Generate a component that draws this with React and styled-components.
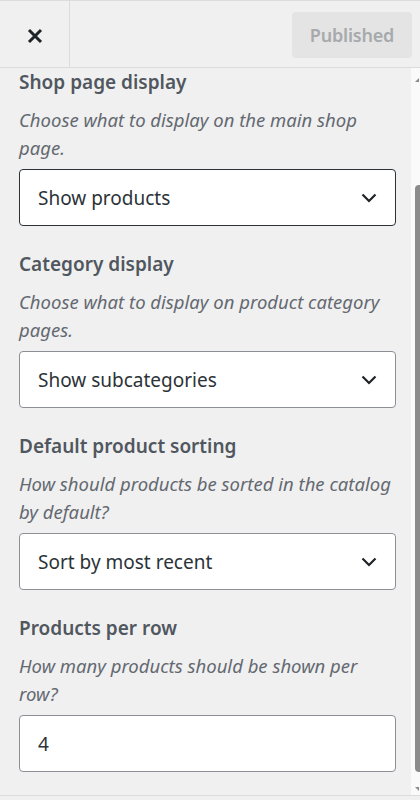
import React from "react";
import styled, { createGlobalStyle } from "styled-components";

const GlobalStyle = createGlobalStyle`
  html, body { margin: 0; padding: 0; background: #f0f0f1; }
  body { font-family: "Noto Sans", "Open Sans", sans-serif; }
  * { box-sizing: border-box; }
`;

const Page = styled.div`
  width: 420px;
  height: 800px;
  display: flex;
  flex-direction: column;
  background: #f0f0f1;
  overflow: hidden;
`;

const Header = styled.header`
  height: 68px;
  flex: 0 0 68px;
  display: flex;
  align-items: center;
  justify-content: space-between;
  border-top: 1px solid #dcdcde;
  border-bottom: 1px solid #dcdcde;
  background: #f0f0f1;
`;

const CloseButton = styled.button`
  width: 70px;
  height: 100%;
  display: flex;
  align-items: center;
  justify-content: center;
  padding: 3px 0 0;
  background: transparent;
  border: none;
  border-right: 1px solid #dcdcde;
  color: #1d2327;
`;

const PublishButton = styled.button`
  width: 120px;
  height: 46px;
  margin-right: 8px;
  margin-top: 2px;
  border: none;
  border-radius: 4px;
  background: #e4e4e4;
  color: #a7aaad;
  font-family: "Noto Sans", sans-serif;
  font-size: 18px;
  font-weight: 600;
  letter-spacing: -0.2px;
`;

const Body = styled.div`
  flex: 1;
  display: flex;
  min-height: 0;
`;

const Content = styled.main`
  width: 411px;
  padding: 1px 15px 0 19px;
  display: flex;
  flex-direction: column;
  gap: 25px;
`;

const Scrollbar = styled.div`
  width: 9px;
  background: #fafafa;
  display: flex;
  flex-direction: column;
  align-items: flex-end;
  padding: 10px 0 4px;
`;

const Arrow = styled.div`
  width: 0;
  height: 0;
  margin-right: 1px;
  border-left: 4px solid transparent;
  border-right: 0 solid transparent;
  ${(p) =>
    p.$down
      ? "border-top: 4px solid #8a8a8a;"
      : "border-bottom: 4px solid #8a8a8a;"}
`;

const Thumb = styled.div`
  width: 5px;
  margin-top: 103px;
  height: 587px;
  background: #8b8b8b;
  border-radius: 4px 0 0 4px;
`;

const Spacer = styled.div`
  flex: 1;
`;

const Footer = styled.footer`
  flex: 0 0 5px;
  border-top: 1px solid #dcdcde;
  background: #f0f0f1;
`;

const Section = styled.section`
  display: flex;
  flex-direction: column;
`;

const Title = styled.h3`
  margin: 0 0 11px;
  font-size: 19px;
  line-height: 26px;
  font-weight: 600;
  color: #50575e;
`;

const Desc = styled.p`
  margin: 0 0 7px;
  font-size: 18.5px;
  line-height: 28px;
  font-style: italic;
  color: #646970;
`;

const Field = styled.div`
  height: 57px;
  display: flex;
  align-items: center;
  padding: 0 18px;
  background: #fff;
  border: 1px solid ${(p) => (p.$focused ? "#2c3338" : "#8c8f94")};
  border-radius: 4px;
  font-size: 19px;
  color: #2c3338;
  justify-content: space-between;
`;

const Chevron = () => (
  <svg width="16" height="10" viewBox="0 0 16 10" aria-hidden="true">
    <path d="M1.5 1.5 L8 8 L14.5 1.5" fill="none" stroke="#1d2327" strokeWidth="2.2" />
  </svg>
);

const sections = [
  {
    title: "Shop page display",
    desc: "Choose what to display on the main shop page.",
    value: "Show products",
    select: true,
    focused: true,
  },
  {
    title: "Category display",
    desc: "Choose what to display on product category pages.",
    value: "Show subcategories",
    select: true,
  },
  {
    title: "Default product sorting",
    desc: "How should products be sorted in the catalog by default?",
    value: "Sort by most recent",
    select: true,
  },
  {
    title: "Products per row",
    desc: "How many products should be shown per row?",
    value: "4",
    select: false,
  },
];

export default function App() {
  return (
    <Page>
      <GlobalStyle />
      <Header>
        <CloseButton aria-label="Close">
          <svg width="16" height="16" viewBox="0 0 16 16" aria-hidden="true">
            <path d="M2 2 L14 14 M14 2 L2 14" stroke="#1d2327" strokeWidth="3" />
          </svg>
        </CloseButton>
        <PublishButton>Published</PublishButton>
      </Header>
      <Body>
        <Content>
          {sections.map((s) => (
            <Section key={s.title}>
              <Title>{s.title}</Title>
              <Desc>{s.desc}</Desc>
              <Field $focused={s.focused}>
                <span>{s.value}</span>
                {s.select && <Chevron />}
              </Field>
            </Section>
          ))}
        </Content>
        <Scrollbar>
          <Arrow />
          <Thumb />
          <Spacer />
          <Arrow $down />
        </Scrollbar>
      </Body>
      <Footer />
    </Page>
  );
}
